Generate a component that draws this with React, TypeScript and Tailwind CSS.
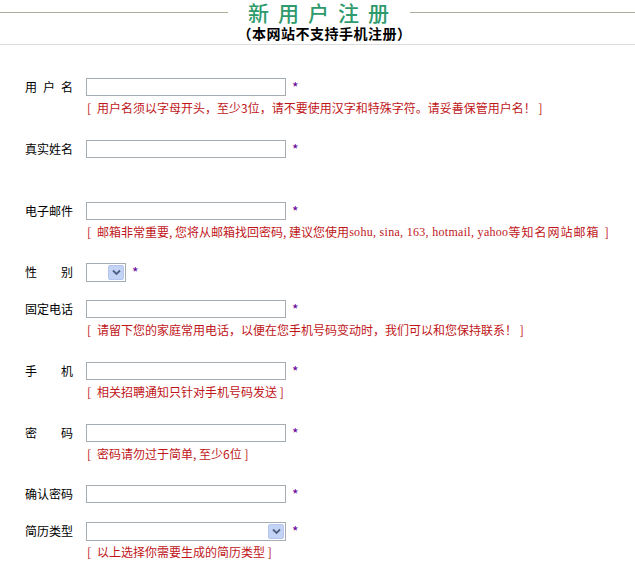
import { ReactNode } from "react";

const cjk = '"Noto Sans CJK SC", "Noto Sans", sans-serif';

function Star() {
  return <span className="ml-[6px] text-[14px] leading-none text-[#660099]">*</span>;
}

function TextBox({ w = "w-[200px]" }: { w?: string }) {
  return <input className={`${w} h-[18px] border border-[#a5acb2] bg-white outline-none`} />;
}

// old xp style drop-down: white field plus a blue arrow button on the right
function DropBox({ w }: { w: string }) {
  return (
    <div className={`${w} h-[19px] flex border border-[#a5acb2] bg-white p-px`}>
      <div className="flex-1" />
      <div className="w-[16px] flex items-center justify-center rounded-[2px] bg-[#c3d3f5] border border-[#b4c6ee]">
        <svg width="9" height="7" viewBox="0 0 9 7">
          <path d="M1 1.5 L4.5 5 L8 1.5" fill="none" stroke="#4d6185" strokeWidth="1.8" />
        </svg>
      </div>
    </div>
  );
}

function Row({
  label,
  field,
  hint,
  h = "h-[62px]",
}: {
  label: string[];
  field: ReactNode;
  hint?: ReactNode;
  h?: string;
}) {
  return (
    <div className={h}>
      <div className="h-[22px] flex items-center">
        <div className="w-[48px] flex justify-between text-[12px] text-black">
          {label.map((c, i) => (
            <span key={i}>{c}</span>
          ))}
        </div>
        <div className="ml-[13px] flex items-center">
          {field}
          <Star />
        </div>
      </div>
      {hint && (
        <div className="h-[20px] flex items-center pl-[62px] text-[12px] text-[#c0161a] whitespace-nowrap">
          <span className="mr-[6px]">[</span>
          {hint}
        </div>
      )}
    </div>
  );
}

export default function App() {
  return (
    <div className="w-[635px] h-[561px] bg-white overflow-hidden" style={{ fontFamily: cjk }}>
      {/* heading */}
      <div className="h-[24px] flex items-center">
        <div className="w-[228px] h-px bg-[#aeae98]" />
        <h1 className="pl-[20px] pr-[12px] text-[21px] font-medium leading-[24px] tracking-[9px] text-[#2f9a6c]">
          新用户注册
        </h1>
        <div className="flex-1 h-px bg-[#aeae98]" />
      </div>
      <p className="mt-px pl-[14px] text-center text-[14px] font-bold tracking-[0.5px] leading-[17px] text-black">
        （本网站不支持手机注册）
      </p>
      <div className="mt-[2px] h-px bg-[#dcdcdc]" />

      {/* form */}
      <div className="pl-[25px] mt-[31px]">
        <Row
          label={["用", "户", "名"]}
          field={<TextBox />}
          hint="用户名须以字母开头，至少3位，请不要使用汉字和特殊字符。请妥善保管用户名！ ]"
        />
        <Row label={["真", "实", "姓", "名"]} field={<TextBox />} />
        <Row
          label={["电", "子", "邮", "件"]}
          h="h-[61px]"
          field={<TextBox />}
          hint={
            <>
              邮箱非常重要, 您将从邮箱找回密码, 建议您使用
              <span className="tracking-[0.3px]" style={{ fontFamily: '"Liberation Serif", serif' }}>
                sohu, sina, 163, hotmail, yahoo
              </span>
              <span className="tracking-[1px]">等知名网站邮箱</span>&nbsp;&nbsp;]
            </>
          }
        />
        <Row label={["性", "别"]} field={<DropBox w="w-[40px]" />} h="h-[37px]" />
        <Row
          label={["固", "定", "电", "话"]}
          field={<TextBox />}
          hint="请留下您的家庭常用电话，以便在您手机号码变动时，我们可以和您保持联系！  ]"
        />
        <Row label={["手", "机"]} field={<TextBox />} hint="相关招聘通知只针对手机号码发送 ]" />
        <Row label={["密", "码"]} h="h-[61px]" field={<TextBox />} hint="密码请勿过于简单, 至少6位 ]" />
        <Row label={["确", "认", "密", "码"]} field={<TextBox />} h="h-[37px]" />
        <Row
          label={["简", "历", "类", "型"]}
          field={<DropBox w="w-[200px]" />}
          hint="以上选择你需要生成的简历类型 ]"
        />
      </div>
    </div>
  );
}
